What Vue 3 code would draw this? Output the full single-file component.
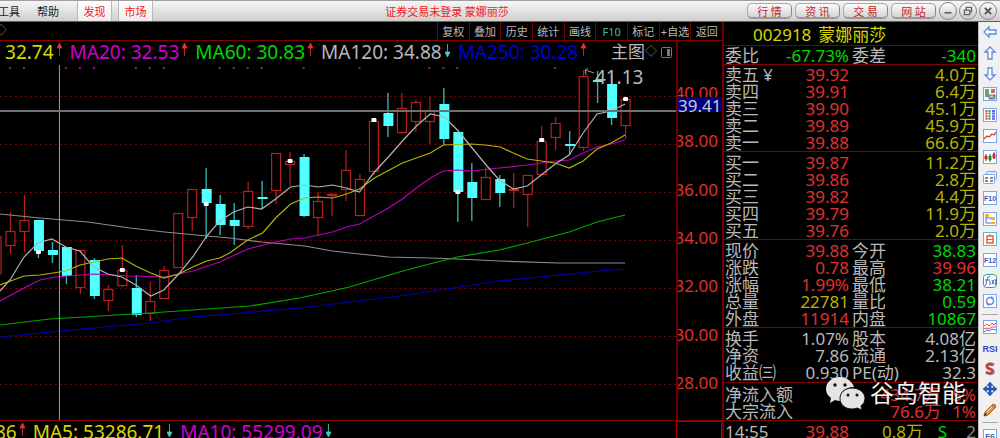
<script setup>
const menu = ['工具', '帮助']
const siteLinks = ['行 情', '资 讯', '交 易', '网 站']
const tools = ['复权', '叠加', '历史', '统计', '画线', 'F10', '标记', '+自选', '返回']

const averages = [
  { text: ': 32.74', color: 'yellow', up: true },
  { text: 'MA20: 32.53', color: 'magenta', up: true },
  { text: 'MA60: 30.83', color: 'green', up: true },
  { text: 'MA120: 34.88', color: 'grey', up: false },
  { text: 'MA250: 30.28', color: 'blue', up: true }
]
const volumes = [
  { text: '86', color: 'yellow', up: true },
  { text: 'MA5: 53286.71', color: 'yellow', up: false },
  { text: 'MA10: 55299.09', color: 'magenta', up: false }
]
const ticks = ['40.00', '38.00', '36.00', '34.00', '32.00', '30.00', '28.00']
const gridLines = [97, 145, 193, 241, 289, 337, 385]

// centre x, body top, body bottom, high, low, rising
const candles = [
  [-4, 236, 273, 236, 273, 1], [10, 231, 245, 212, 254, 1], [24, 220, 231, 195, 252, 1],
  [38, 220, 251, 220, 258, 0], [52, 250, 255, 242, 263, 0], [66, 247, 276, 247, 284, 0],
  [80, 250, 287, 250, 294, 1], [94, 260, 296, 258, 299, 0], [108, 289, 300, 285, 311, 1],
  [122, 270, 285, 245, 287, 1], [136, 288, 315, 275, 317, 0], [150, 301, 313, 282, 321, 1],
  [164, 270, 298, 266, 298, 1], [178, 213, 267, 213, 267, 1], [192, 189, 217, 189, 231, 1],
  [206, 189, 203, 168, 239, 0], [220, 204, 225, 195, 235, 0], [234, 220, 226, 203, 245, 0],
  [248, 191, 226, 182, 229, 1], [262, 197, 199, 181, 209, 0], [276, 153, 190, 153, 204, 1],
  [290, 161, 164, 152, 186, 1], [304, 157, 216, 154, 217, 0], [318, 201, 217, 192, 236, 1],
  [332, 194, 195, 193, 216, 1], [346, 170, 189, 150, 201, 1], [360, 179, 215, 174, 216, 1],
  [374, 121, 171, 121, 175, 1], [388, 113, 126, 93, 137, 0], [402, 108, 132, 93, 134, 1],
  [416, 102, 121, 100, 132, 1], [430, 110, 121, 97, 144, 1], [444, 104, 139, 88, 145, 0],
  [458, 132, 192, 132, 222, 0], [472, 182, 198, 163, 221, 0], [486, 177, 199, 167, 200, 1],
  [500, 179, 193, 175, 207, 0], [514, 189, 190, 173, 208, 1], [528, 175, 194, 175, 227, 1],
  [542, 141, 174, 126, 174, 1], [556, 123, 137, 117, 150, 1], [570, 144, 146, 131, 155, 0],
  [584, 76, 147, 70, 151, 1], [598, 80, 82, 71, 103, 0], [612, 84, 118, 73, 125, 0],
  [626, 99, 125, 99, 139, 1]
].map(([x, top, bottom, high, low, rising]) => ({ x, top, bottom, high, low, rising }))

const signals = [[38, 252], [122, 270], [206, 204], [290, 161], [374, 120], [458, 192], [542, 140], [626, 99]]
const marks = [10, 24, 66, 80, 94, 136, 150, 164, 220, 234, 248, 262, 304, 360, 430, 444, 458, 556]

const curves = [
  { color: '#8c8c8c', points: '0,214 40,218 88,222 130,228 165,232 207,236 230,238 262,242 305,246 333,251 360,254 389,257 431,258 458,259 500,261 560,263 626,263' },
  { color: '#0000b8', points: '0,337 50,332 94,328 150,323 193,317 230,314 300,308 400,296 500,281 560,275 600,271 626,269' },
  { color: '#00a800', points: '0,325 50,319 100,316 150,313 207,309 250,306 300,298 350,287 400,272 430,264 458,257 500,250 528,243 570,232 598,222 626,215' },
  { color: '#b800b8', points: '0,301 24,288 40,280 55,277 94,274 130,276 165,277 193,271 220,262 248,249 276,242 291,239 305,238 333,232 347,227 360,224 389,208 403,199 417,188 431,178 444,171 458,170 472,171 500,168 528,165 556,161 570,160 584,153 598,147 612,144 626,140' },
  { color: '#b4b400', points: '0,285 24,276 40,275 66,271 80,265 108,259 122,258 136,266 151,273 164,278 179,274 193,267 207,261 220,258 230,253 248,240 263,233 276,218 291,204 305,198 319,197 333,198 347,194 360,189 375,178 403,163 417,158 431,153 444,145 472,144 486,145 501,147 514,153 528,159 556,163 570,168 584,161 598,149 612,143 626,135' },
  { color: '#b4b4b4', points: '0,291 10,280 24,257 38,243 52,239 66,247 80,251 94,267 108,274 122,277 136,285 151,296 164,290 179,274 193,257 207,236 220,221 234,212 248,207 262,209 276,199 291,187 305,185 319,187 333,185 347,188 360,192 375,172 389,157 403,141 417,126 431,114 445,117 459,131 472,147 486,164 500,180 514,189 528,186 542,175 556,164 570,155 584,133 598,114 612,111 626,104' }
]

const sells = [
  ['卖五', '39.92', '4.0万'], ['卖四', '39.91', '6.4万'], ['卖三', '39.90', '45.1万'],
  ['卖二', '39.89', '45.9万'], ['卖一', '39.88', '66.6万']
]
const buys = [
  ['买一', '39.87', '11.2万'], ['买二', '39.86', '2.8万'], ['买三', '39.82', '4.4万'],
  ['买四', '39.79', '11.9万'], ['买五', '39.76', '2.0万']
]
const prices = [
  ['现价', '39.88', 'red', '今开', '38.83', 'green'],
  ['涨跌', '0.78', 'red', '最高', '39.96', 'red'],
  ['涨幅', '1.99%', 'red', '最低', '38.21', 'green'],
  ['总量', '22781', 'olive', '量比', '0.59', 'green'],
  ['外盘', '11914', 'red', '内盘', '10867', 'green']
]
const basics = [
  ['换手', '1.07%', 'grey', '股本', '4.08亿', 'grey'],
  ['净资', '7.86', 'grey', '流通', '2.13亿', 'grey'],
  ['收益㈢', '0.930', 'grey', 'PE(动)', '32.3', 'grey']
]
const flows = [['净流入额', '434.7万', '5%'], ['大宗流入', '76.6万', '1%']]

const frame = '<rect x="1.5" y="1.5" width="13" height="13" fill="#fff" stroke="#7aa6ee"/>'
const lettered = (text, color = '#3858c8', size = 8) =>
  `${frame}<text x="8" y="11" text-anchor="middle" font-family="Liberation Sans, sans-serif" font-weight="700" font-size="${size}" fill="${color}">${text}</text>`
const arrowShape = 'M2 8 7 3V6H14V10H7V13Z'
const sideIcons = [
  { name: '后退', art: `<path d="${arrowShape}" fill="#fff" stroke="#5b8be0" stroke-width="1.3"/>` },
  { name: '上移', art: `<path d="${arrowShape}" transform="rotate(90 8 8)" fill="#fff" stroke="#5b8be0" stroke-width="1.3"/>` },
  { name: '下移', art: `<path d="${arrowShape}" transform="rotate(-90 8 8)" fill="#fff" stroke="#5b8be0" stroke-width="1.3"/>` },
  { name: '报价', art: `${frame}<path d="M3 4H7M3 6H7M3 8H7M3 10H7" stroke="#2a8a4a" stroke-width="1.4"/><path d="M9 4H13M9 6H13" stroke="#d03030" stroke-width="1.4"/><path d="M7 9H13V13H7Z" fill="#ddd" stroke="#666"/><path d="M8 11 10 12.5 13 9" fill="none" stroke="#555"/>` },
  { name: '列表', art: `${frame}<path d="M4.5 3V13" stroke="#e04040" stroke-width="2" stroke-dasharray="2 .6"/><path d="M7.500 3V13" stroke="#30a050" stroke-width="2" stroke-dasharray="2 .6"/><path d="M11.500 3V13" stroke="#6060e0" stroke-width="3" stroke-dasharray="2 .6"/>` },
  { name: '分时', art: `${frame}<path d="M2 11 5 8 7 9 10 6 12 7 14 4" fill="none" stroke="#e03838" stroke-width="1.3"/>` },
  { name: 'K线', art: `${frame}<path d="M4 5V12M12 3V10" stroke="#d02020"/><path d="M8 5V13" stroke="#109030"/><path d="M3 7H5V10H3ZM11 5H13V9H11Z" fill="#e02020" stroke="#e02020"/><path d="M7 7H9V11H7Z" fill="#109030" stroke="#109030"/>` },
  { name: '多窗', art: '<rect x="4.5" y="2.5" width="10" height="8" rx="1" fill="#dbe8fb" stroke="#7aa6ee"/><rect x="1.5" y="5.5" width="11" height="9" rx="1" fill="#fff" stroke="#7aa6ee"/><path d="M3 9H6M8 9H11M3 12H6M8 12H11" stroke="#888" stroke-width="2"/>' },
  { name: '资料', art: lettered('F10', '#3858c8', 7) },
  { name: '板块', art: `${frame}<path d="M4 4V12H9M4 7H9" fill="none" stroke="#4878d0"/><path d="M3 3H7V6H3ZM9 6H13V9H9ZM9 11H13V13H9Z" fill="#f0b030"/>` },
  { name: '自选', art: '<rect x="1.5" y="1.5" width="13" height="13" fill="#fff" stroke="#58b8e0"/><rect x="5" y="5" width="6" height="7" fill="none" stroke="#f06020" stroke-width="1.5"/><path d="M8 3V5M5 8.5H11" stroke="#f06020" stroke-width="1.2"/>' },
  { name: '简况', art: lettered('F12', '#3858c8', 7) },
  { name: '公式', art: '<rect x="1.5" y="1.5" width="13" height="13" rx="3" fill="#fff" stroke="#3a9a90"/><path d="M8 3Q5.5 3 5 7L4 11Q3.5 13 2.5 13M3 7H8M8 8V12M13 6Q15 9 13 12M10 7 12 11M12 7 10 11" fill="none" stroke="#4060c8"/>' },
  { name: '周期', art: `${frame}<circle cx="8" cy="8" r="3.5" fill="none" stroke="#5b8be0" stroke-width="1.5"/><path d="M9 3 12 5 9 6ZM7 13 4 11 7 10Z" fill="#5b8be0"/>` },
  { divider: true },
  { name: '指标', art: `${frame}<path d="M2 7 5 5 7 7 10 4 12 6 14 4" fill="none" stroke="#e05050"/><path d="M2 10 5 9 7 10 10 8 14 8" fill="none" stroke="#e05050"/><path d="M2 13 5 11 7 12 10 10 14 11" fill="none" stroke="#5070e0"/>` },
  { name: 'RSI', art: '<text x="8" y="12" text-anchor="middle" font-family="Liberation Sans, sans-serif" font-weight="700" font-size="9" fill="#3c3cd0">RSI</text>' },
  { name: '资金', art: '<path d="M12 4Q7 1.5 5 4.5 4.5 7 8 8 12 9 11 11.5 8 14 4 11" fill="none" stroke="#888" stroke-width="3"/><path d="M11 4Q7 2 5 4.5 4.5 7 8 8 11 9 10 11.5 7 13 4 11" fill="none" stroke="#d03838" stroke-width="2"/>' },
  { name: '移动', art: '<path d="M8 1 11 4.5H9V7H11.5V5L15 8 11.5 11V9H9V11.5H11L8 15 5 11.5H7V9H4.5V11L1 8 4.5 5V7H7V4.5H5Z" fill="#2458b8" stroke="#2458b8" stroke-width=".6"/>' },
  { name: '画笔', art: '<path d="M2 14 3 10 11 2Q14 2 14 5L6 13Z" fill="#e89830" stroke="#a06828"/><path d="M11 2Q14 2 14 5L12.5 6.5 9.5 3.5Z" fill="#b87878"/><path d="M2 14 3 11 5 13Z" fill="#333"/><path d="M5 10 10 5" stroke="#ffe0a0"/>' },
  { divider: true },
  { name: '设置', art: lettered('F6', '#3858c8') }
]
</script>

<template>
  <div class="app">
    <header class="titlebar">
      <nav class="menu">
        <button v-for="m in menu" :key="m" class="menu-item">{{ m }}</button>
        <button class="menu-tab">发现</button>
        <button class="menu-tab">市场</button>
      </nav>
      <div class="title">证券交易未登录 蒙娜丽莎</div>
      <div class="site-links">
        <button v-for="s in siteLinks" :key="s" class="pill">{{ s }}</button>
      </div>
      <div class="window-buttons">
        <button class="round" aria-label="最小化"><svg viewBox="0 0 18 18"><path d="M5 11H13" stroke="#666" stroke-width="2" /></svg></button>
        <button class="round" aria-label="还原"><svg viewBox="0 0 18 18"><path d="M7 8V5H13V10H11M5 8H11V13H5Z" fill="none" stroke="#666" stroke-width="1.5" /></svg></button>
        <button class="round" aria-label="关闭"><svg viewBox="0 0 18 18"><path d="M5.500 5.500 12.500 12.500M12.500 5.500 5.500 12.500" stroke="#555" stroke-width="2.200" /></svg></button>
      </div>
    </header>

    <div class="workspace">
      <main class="chart">
        <div class="toolbar">
          <span class="diamond">◇</span>
          <div class="tools">
            <button v-for="t in tools" :key="t" :class="{ teal: t === 'F10' }">{{ t }}</button>
          </div>
        </div>

        <div class="chart-body">
          <section class="plot">
            <svg class="canvas" viewBox="0 41 677 379" preserveAspectRatio="none" aria-label="K线图">
              <line v-for="y in gridLines" :key="y" x1="0" x2="677" :y1="y - 0.5" :y2="y - 0.5" stroke="#780000" stroke-dasharray="2 3" />
              <rect v-for="x in marks" :key="x" :x="x - 1" y="67" width="2" height="2" fill="#b000b0" />
              <g v-for="c in candles" :key="c.x">
                <template v-if="c.rising">
                  <path :d="`M${c.x + 0.5} ${c.high}V${c.top}M${c.x + 0.5} ${c.bottom}V${c.low}`" stroke="#b82020" stroke-width="1.2" />
                  <rect :x="c.x - 4" :y="c.top + 0.5" width="9" :height="c.bottom - c.top" fill="#000" stroke="#b82020" stroke-width="1.2" />
                </template>
                <template v-else>
                  <path :d="`M${c.x + 0.5} ${c.high}V${c.low}`" stroke="#30b0b0" stroke-width="1.4" />
                  <rect :x="c.x - 4" :y="c.top" width="10" :height="c.bottom - c.top" fill="#50ffff" />
                </template>
              </g>
              <polyline v-for="c in curves" :key="c.color" :points="c.points" fill="none" :stroke="c.color" stroke-width="1.2" />
              <rect v-for="s in signals" :key="s[0]" :x="s[0] - 2" :y="s[1] - 2" width="5" height="4" rx="1" fill="#fff" />
              <path d="M59.500 65V420" stroke="#a0a0a0" />
              <path d="M0 111H677" stroke="#707070" stroke-width="2" />
              <path d="M595 73 586 70M589 68 586 70 587 75" fill="none" stroke="#999" />
            </svg>
            <div class="readout">
              <span v-for="a in averages" :key="a.text" class="figure" :class="a.color">{{ a.text }}<svg class="arrow" viewBox="0 0 5 14"><path v-if="a.up" d="M2.500 13V1M0 5 2.500 0 5 5Z" stroke="#e83030" fill="#e83030" stroke-width=".8" /><path v-else d="M2.500 1V13M0 9 2.500 14 5 9Z" stroke="#40d0d0" fill="#40d0d0" stroke-width=".8" /></svg></span>
              <span class="pane-name">主图<span class="diamond">◇</span>
                <svg class="pane-icon" viewBox="0 0 11 11"><rect x=".500" y=".500" width="10" height="10" rx="1" fill="none" stroke="#777" /><path d="M6 2H9V9H6Z" fill="#777" /></svg>
              </span>
            </div>
            <div class="peak">41.13</div>
          </section>
          <aside class="axis">
            <div v-for="t in ticks" :key="t" class="tick">{{ t }}</div>
            <div class="cursor-price">39.41</div>
          </aside>
        </div>

        <div class="volume">
          <div class="readout">
            <span v-for="a in volumes" :key="a.text" class="figure" :class="a.color">{{ a.text }}<svg class="arrow" viewBox="0 0 5 14"><path v-if="a.up" d="M2.500 13V1M0 5 2.500 0 5 5Z" stroke="#e83030" fill="#e83030" stroke-width=".8" /><path v-else d="M2.500 1V13M0 9 2.500 14 5 9Z" stroke="#40d0d0" fill="#40d0d0" stroke-width=".8" /></svg></span>
          </div>
          <div class="volume-axis"></div>
        </div>
      </main>

      <section class="quote">
        <h1 class="stock"><span>002918</span><span>蒙娜丽莎</span></h1>
        <table>
          <tbody class="ratio">
            <tr><th>委比</th><td class="green">-67.73%</td><th>委差</th><td class="green">-340</td></tr>
          </tbody>
          <tbody class="sells">
            <tr v-for="(r, i) in sells" :key="r[0]">
              <th>{{ r[0] }}<span v-if="i === 0" class="yen">¥</span></th><td class="red">{{ r[1] }}</td><td class="olive wide">{{ r[2] }}</td>
            </tr>
          </tbody>
          <tbody>
            <tr v-for="r in buys" :key="r[0]">
              <th>{{ r[0] }}</th><td class="red">{{ r[1] }}</td><td class="olive wide">{{ r[2] }}</td>
            </tr>
          </tbody>
          <tbody>
            <tr v-for="r in prices" :key="r[0]">
              <th>{{ r[0] }}</th><td :class="r[2]">{{ r[1] }}</td><th>{{ r[3] }}</th><td :class="r[5]">{{ r[4] }}</td>
            </tr>
          </tbody>
          <tbody class="basics">
            <tr v-for="r in basics" :key="r[0]">
              <th>{{ r[0] }}</th><td :class="r[2]">{{ r[1] }}</td><th>{{ r[3] }}</th><td :class="r[5]">{{ r[4] }}</td>
            </tr>
          </tbody>
          <tbody class="flows">
            <tr v-for="r in flows" :key="r[0]">
              <th class="wide">{{ r[0] }}</th><td class="red wide split"><span>{{ r[1] }}</span><span class="percent">{{ r[2] }}</span></td>
            </tr>
          </tbody>
          <tbody class="trades">
            <tr>
              <th>14:55</th><td class="red">39.88</td>
              <td class="wide split"><span class="olive">0.8万</span><span class="side green">S</span><span class="count">2</span></td>
            </tr>
          </tbody>
        </table>
        <div class="watermark">
          <svg viewBox="0 0 40 33" aria-hidden="true">
            <path d="M14 0C6 0 0 5 0 12 0 16 2 19 5 21L4 26 9 23Q12 24 15 24 13 14 22 11 25 10 28 10C26 4 20 0 14 0Z" fill="#e4e4e4" />
            <path d="M26 11C19 11 14 15.500 14 21.500S19 32 26 32Q29 32 31 31L36 33 35 29Q39 26 39 21.500C39 15.500 33 11 26 11Z" fill="#e4e4e4" stroke="#111" />
            <g fill="#111"><circle cx="9" cy="8" r="1.700" /><circle cx="19" cy="8" r="1.700" /><circle cx="22" cy="18" r="1.500" /><circle cx="31" cy="18" r="1.500" /></g>
          </svg>
          <span>谷鸟智能</span>
        </div>
      </section>

      <nav class="sidebar">
        <template v-for="(s, i) in sideIcons" :key="i">
          <hr v-if="s.divider">
          <button v-else :aria-label="s.name"><svg viewBox="0 0 16 16" v-html="s.art"></svg></button>
        </template>
      </nav>
    </div>
  </div>
</template>

<style>
body {
  margin: 0;
  background: #000;
}
</style>

<style scoped>
.app {
  display: flex;
  flex-direction: column;
  height: 100vh;
  overflow: hidden;
  background: #000;
  color: #b8b8b8;
  font-family: "Noto Sans", "Noto Sans CJK SC", sans-serif;
  font-size: 17px;
}
button {
  margin: 0;
  padding: 0;
  border: 0;
  background: none;
  color: inherit;
  font: inherit;
  white-space: nowrap;
}
svg {
  display: block;
}

.titlebar {
  flex: none;
  display: flex;
  align-items: center;
  box-sizing: border-box;
  height: 22px;
  border-top: 1px solid #a09ca0;
  border-bottom: 1px solid #606060;
  background: linear-gradient(#f6f6f6, #cecece);
  color: #222;
  font-family: "Noto Sans CJK SC", sans-serif;
  font-size: 11px;
  line-height: 18px;
}
.menu {
  display: flex;
  height: 100%;
}
.menu-item {
  width: 40px;
  text-align: left;
}
.menu-item:first-child {
  width: 37px;
  text-indent: -2px;
}
.menu-tab {
  width: 35px;
  margin-right: 6px;
  border: 1px solid #b8b8b8;
  border-width: 0 1px;
  background: linear-gradient(#fff, #ececec);
  color: #f02020;
}
.menu-tab:last-child {
  margin-right: 0;
}
.title {
  flex: 1;
  padding-right: 6px;
  text-align: center;
  color: #f02020;
}
.site-links {
  display: flex;
  gap: 3px;
}
.pill {
  box-sizing: border-box;
  width: 45px;
  height: 16px;
  border: 1px solid #aaa;
  border-right-color: #888;
  border-bottom: 2px solid #999;
  border-radius: 5px;
  background: linear-gradient(#fafafa, #d4d4d4);
  color: #c02828;
  line-height: 12px;
}
.window-buttons {
  display: flex;
  gap: 2px;
  padding: 0 3px;
}
.round {
  box-sizing: border-box;
  width: 18px;
  height: 18px;
  border: 1px solid #888;
  border-radius: 50%;
  background: linear-gradient(#fff, #c8c8c8);
}
.round svg {
  width: 16px;
  height: 16px;
}

.workspace {
  flex: 1;
  display: flex;
  min-height: 0;
}
.chart {
  flex: 1;
  display: flex;
  flex-direction: column;
  min-width: 0;
}
.toolbar {
  flex: none;
  display: flex;
  justify-content: space-between;
  height: 18px;
  border-bottom: 1px solid #800000;
  font-size: 11px;
  line-height: 17px;
  overflow: hidden;
}
.diamond {
  color: #777;
  font-size: 12px;
}
.toolbar .diamond {
  margin-left: -5px;
}
.tools {
  display: grid;
  grid-template-columns: repeat(9, 1fr);
  width: 285px;
}
.tools button {
  border-left: 1px solid #700000;
}
.teal {
  color: #38b8b8;
}

.chart-body {
  flex: 1;
  display: flex;
  min-height: 0;
}
.plot {
  position: relative;
  flex: 1;
  min-width: 0;
}
.canvas {
  position: absolute;
  inset: 0;
  width: 100%;
  height: 100%;
}
.readout {
  position: relative;
  display: flex;
  height: 22px;
  margin-left: -5px;
  font-size: 19px;
  line-height: 22px;
  white-space: nowrap;
}
.figure {
  display: flex;
}
.arrow {
  width: 5px;
  height: 14px;
  margin: 2px 8px 0 3px;
}
.pane-name {
  display: flex;
  align-items: center;
  margin-left: auto;
  padding-right: 4px;
  font-size: 17px;
}
.pane-icon {
  width: 11px;
  height: 11px;
  margin-left: 4px;
}
.peak {
  position: absolute;
  left: 88%;
  top: 24px;
  font-size: 19px;
  line-height: 24px;
}
.axis {
  position: relative;
  box-sizing: border-box;
  display: flex;
  flex-direction: column;
  width: 46px;
  padding: 27px 4px 13px 0;
  border-left: 2px solid #700000;
  overflow: hidden;
  color: #e03030;
}
.tick {
  flex: 1;
  display: flex;
  align-items: center;
  justify-content: flex-end;
}
.cursor-price {
  position: absolute;
  left: 0;
  right: 0;
  top: 56px;
  height: 15px;
  background: #000080;
  color: #ccc;
  line-height: 17px;
}
.volume {
  flex: none;
  display: flex;
  height: 17px;
  border-top: 1px solid #800000;
  overflow: hidden;
}
.volume .readout {
  flex: 1;
}
.volume-axis {
  box-sizing: border-box;
  width: 46px;
  border: 1px solid #b00000;
  border-bottom: 0;
}

.quote {
  position: relative;
  flex: none;
  box-sizing: border-box;
  width: 256px;
  border-left: 2px solid #700000;
}
.stock {
  display: flex;
  gap: 7px;
  height: 23px;
  margin: 0;
  padding-left: 29px;
  border-bottom: 1px solid #800000;
  color: #d8d800;
  font-size: 17px;
  font-weight: 400;
  line-height: 25px;
}
table,
tbody {
  display: block;
}
tbody {
  padding: 2px 2px 0 1px;
  border-bottom: 1px solid #800000;
}
.ratio {
  padding-top: 1px;
}
.sells {
  padding-top: 1px;
}
.basics {
  padding-bottom: 1px;
}
.flows {
  padding-top: 3px;
}
.trades {
  border-bottom: 0;
}
tr {
  display: grid;
  grid-template-columns: 60px 64px 60px 1fr;
  height: 17px;
  line-height: 17px;
}
th,
td {
  padding: 0;
  font-weight: 400;
  text-align: right;
  white-space: nowrap;
}
th {
  text-align: left;
}
td + th {
  padding-left: 3px;
}
.wide {
  grid-column: span 2;
}
.yen {
  margin-left: 4px;
}
.split {
  display: flex;
  justify-content: flex-end;
}
.percent {
  width: 35px;
}
.side {
  width: 24px;
}
.count {
  width: 29px;
  color: #888;
}
.yellow { color: #d8d800; }
.magenta { color: #d000d0; }
.green { color: #00d800; }
.grey { color: #b8b8b8; }
.blue { color: #0000d0; }
.red { color: #e03030; }
.olive { color: #b4b400; }
.watermark {
  position: absolute;
  right: 12px;
  bottom: 28px;
  display: flex;
  align-items: center;
  gap: 4px;
  color: #f4f4f4;
  font-size: 24px;
  line-height: 34px;
}
.watermark svg {
  width: 40px;
  height: 33px;
}

.sidebar {
  flex: none;
  display: flex;
  flex-direction: column;
  box-sizing: border-box;
  width: 22px;
  margin-bottom: -8px;
  border-left: 1px solid #bbb;
  background: #f0f0f0;
}
.sidebar button {
  flex: 1;
  display: flex;
  align-items: center;
  justify-content: center;
  min-height: 0;
}
.sidebar svg {
  width: 16px;
  height: 16px;
}
.sidebar hr {
  width: 16px;
  height: 1px;
  margin: 2px auto;
  border: 0;
  background: #aaa;
}
</style>
